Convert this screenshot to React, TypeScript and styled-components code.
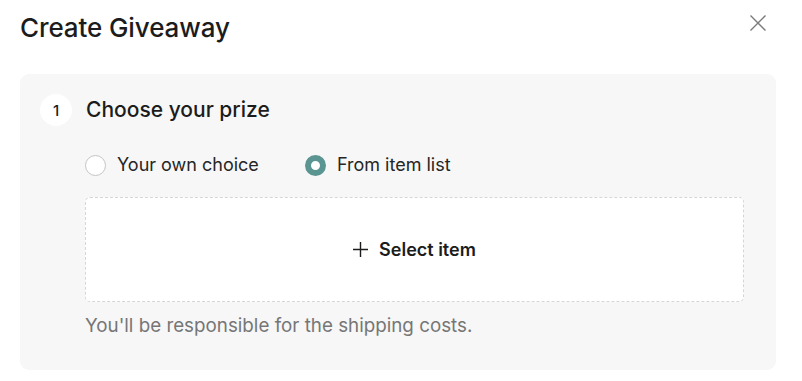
import React, { useState } from "react";
import styled, { createGlobalStyle } from "styled-components";

const Global = createGlobalStyle`
  html, body { margin: 0; padding: 0; background: #ffffff; }
  body { font-family: Inter, "Noto Sans", sans-serif; color: #1a1a1a; }
  * { box-sizing: border-box; }
`;

const Dialog = styled.div`
  width: 802px;
  height: 381px;
  background: #fff;
  display: flex;
  flex-direction: column;
`;

const Header = styled.div`
  display: flex;
  align-items: center;
  justify-content: space-between;
  height: 56px;
  padding: 0 32px 0 20px;
  margin-bottom: 18px;
`;

const Title = styled.h1`
  margin: 0;
  font-size: 26px;
  font-weight: 500;
  line-height: 32px;
  letter-spacing: -0.1px;
  color: #1c1c1c;
`;

const CloseButton = styled.button`
  width: 24px;
  height: 24px;
  padding: 0;
  border: none;
  background: transparent;
  display: flex;
  align-items: center;
  justify-content: center;
  margin-top: -11px;
  cursor: pointer;
`;

const Panel = styled.section`
  margin: 0 26px 0 20px;
  background: #f7f7f7;
  border-radius: 9px;
  padding: 20px 32px 32px 20px;
`;

const StepHeader = styled.div`
  display: flex;
  align-items: center;
  gap: 14px;
  height: 32px;
`;

const StepNumber = styled.div`
  width: 32px;
  height: 32px;
  border-radius: 50%;
  background: #fff;
  display: flex;
  align-items: center;
  justify-content: center;
  font-size: 15px;
  font-weight: 500;
  color: #1c1c1c;
`;

const StepTitle = styled.h2`
  margin: 0;
  font-size: 21px;
  font-weight: 500;
  line-height: 28px;
  color: #1c1c1c;
`;

const StepBody = styled.div`
  padding-left: 45px;
`;

const RadioRow = styled.div`
  display: flex;
  align-items: center;
  gap: 46px;
  margin-top: 27px;
  height: 24px;
`;

const RadioLabel = styled.label`
  display: flex;
  align-items: center;
  gap: 11px;
  font-size: 18px;
  line-height: 24px;
  color: #262626;
  cursor: pointer;
`;

const RadioDot = styled.span<{ $checked: boolean }>`
  width: 21px;
  height: 21px;
  border-radius: 50%;
  background: #fff;
  border: ${(p) => (p.$checked ? "6.5px solid #5b9591" : "1px solid #c4c4c4")};
  flex: none;
`;

const SelectBox = styled.button`
  margin-top: 20px;
  width: 100%;
  height: 105px;
  background: #fff;
  border: 1px dashed #d6d6d6;
  border-radius: 5px;
  display: flex;
  align-items: center;
  justify-content: center;
  gap: 11px;
  font-family: inherit;
  font-size: 18px;
  font-weight: 600;
  color: #1c1c1c;
  cursor: pointer;
`;

const Helper = styled.p`
  margin: 12px 0 0;
  font-size: 18.8px;
  line-height: 24px;
  color: #767676;
`;

export default function App() {
  const [choice, setChoice] = useState<"own" | "list">("list");
  return (
    <>
      <Global />
      <Dialog>
        <Header>
          <Title>Create Giveaway</Title>
          <CloseButton aria-label="Close">
            <svg width="16" height="16" viewBox="0 0 16 16">
              <path d="M0.5 0.5 L15.5 15.5 M15.5 0.5 L0.5 15.5" stroke="#7a7a7a" strokeWidth="1.4" />
            </svg>
          </CloseButton>
        </Header>
        <Panel>
          <StepHeader>
            <StepNumber>1</StepNumber>
            <StepTitle>Choose your prize</StepTitle>
          </StepHeader>
          <StepBody>
            <RadioRow>
              <RadioLabel onClick={() => setChoice("own")}>
                <RadioDot $checked={choice === "own"} />
                Your own choice
              </RadioLabel>
              <RadioLabel onClick={() => setChoice("list")}>
                <RadioDot $checked={choice === "list"} />
                From item list
              </RadioLabel>
            </RadioRow>
            <SelectBox>
              <svg width="15" height="15" viewBox="0 0 15 15">
                <path d="M7.5 0 V15 M0 7.5 H15" stroke="#1c1c1c" strokeWidth="1.4" />
              </svg>
              Select item
            </SelectBox>
            <Helper>You'll be responsible for the shipping costs.</Helper>
          </StepBody>
        </Panel>
      </Dialog>
    </>
  );
}
